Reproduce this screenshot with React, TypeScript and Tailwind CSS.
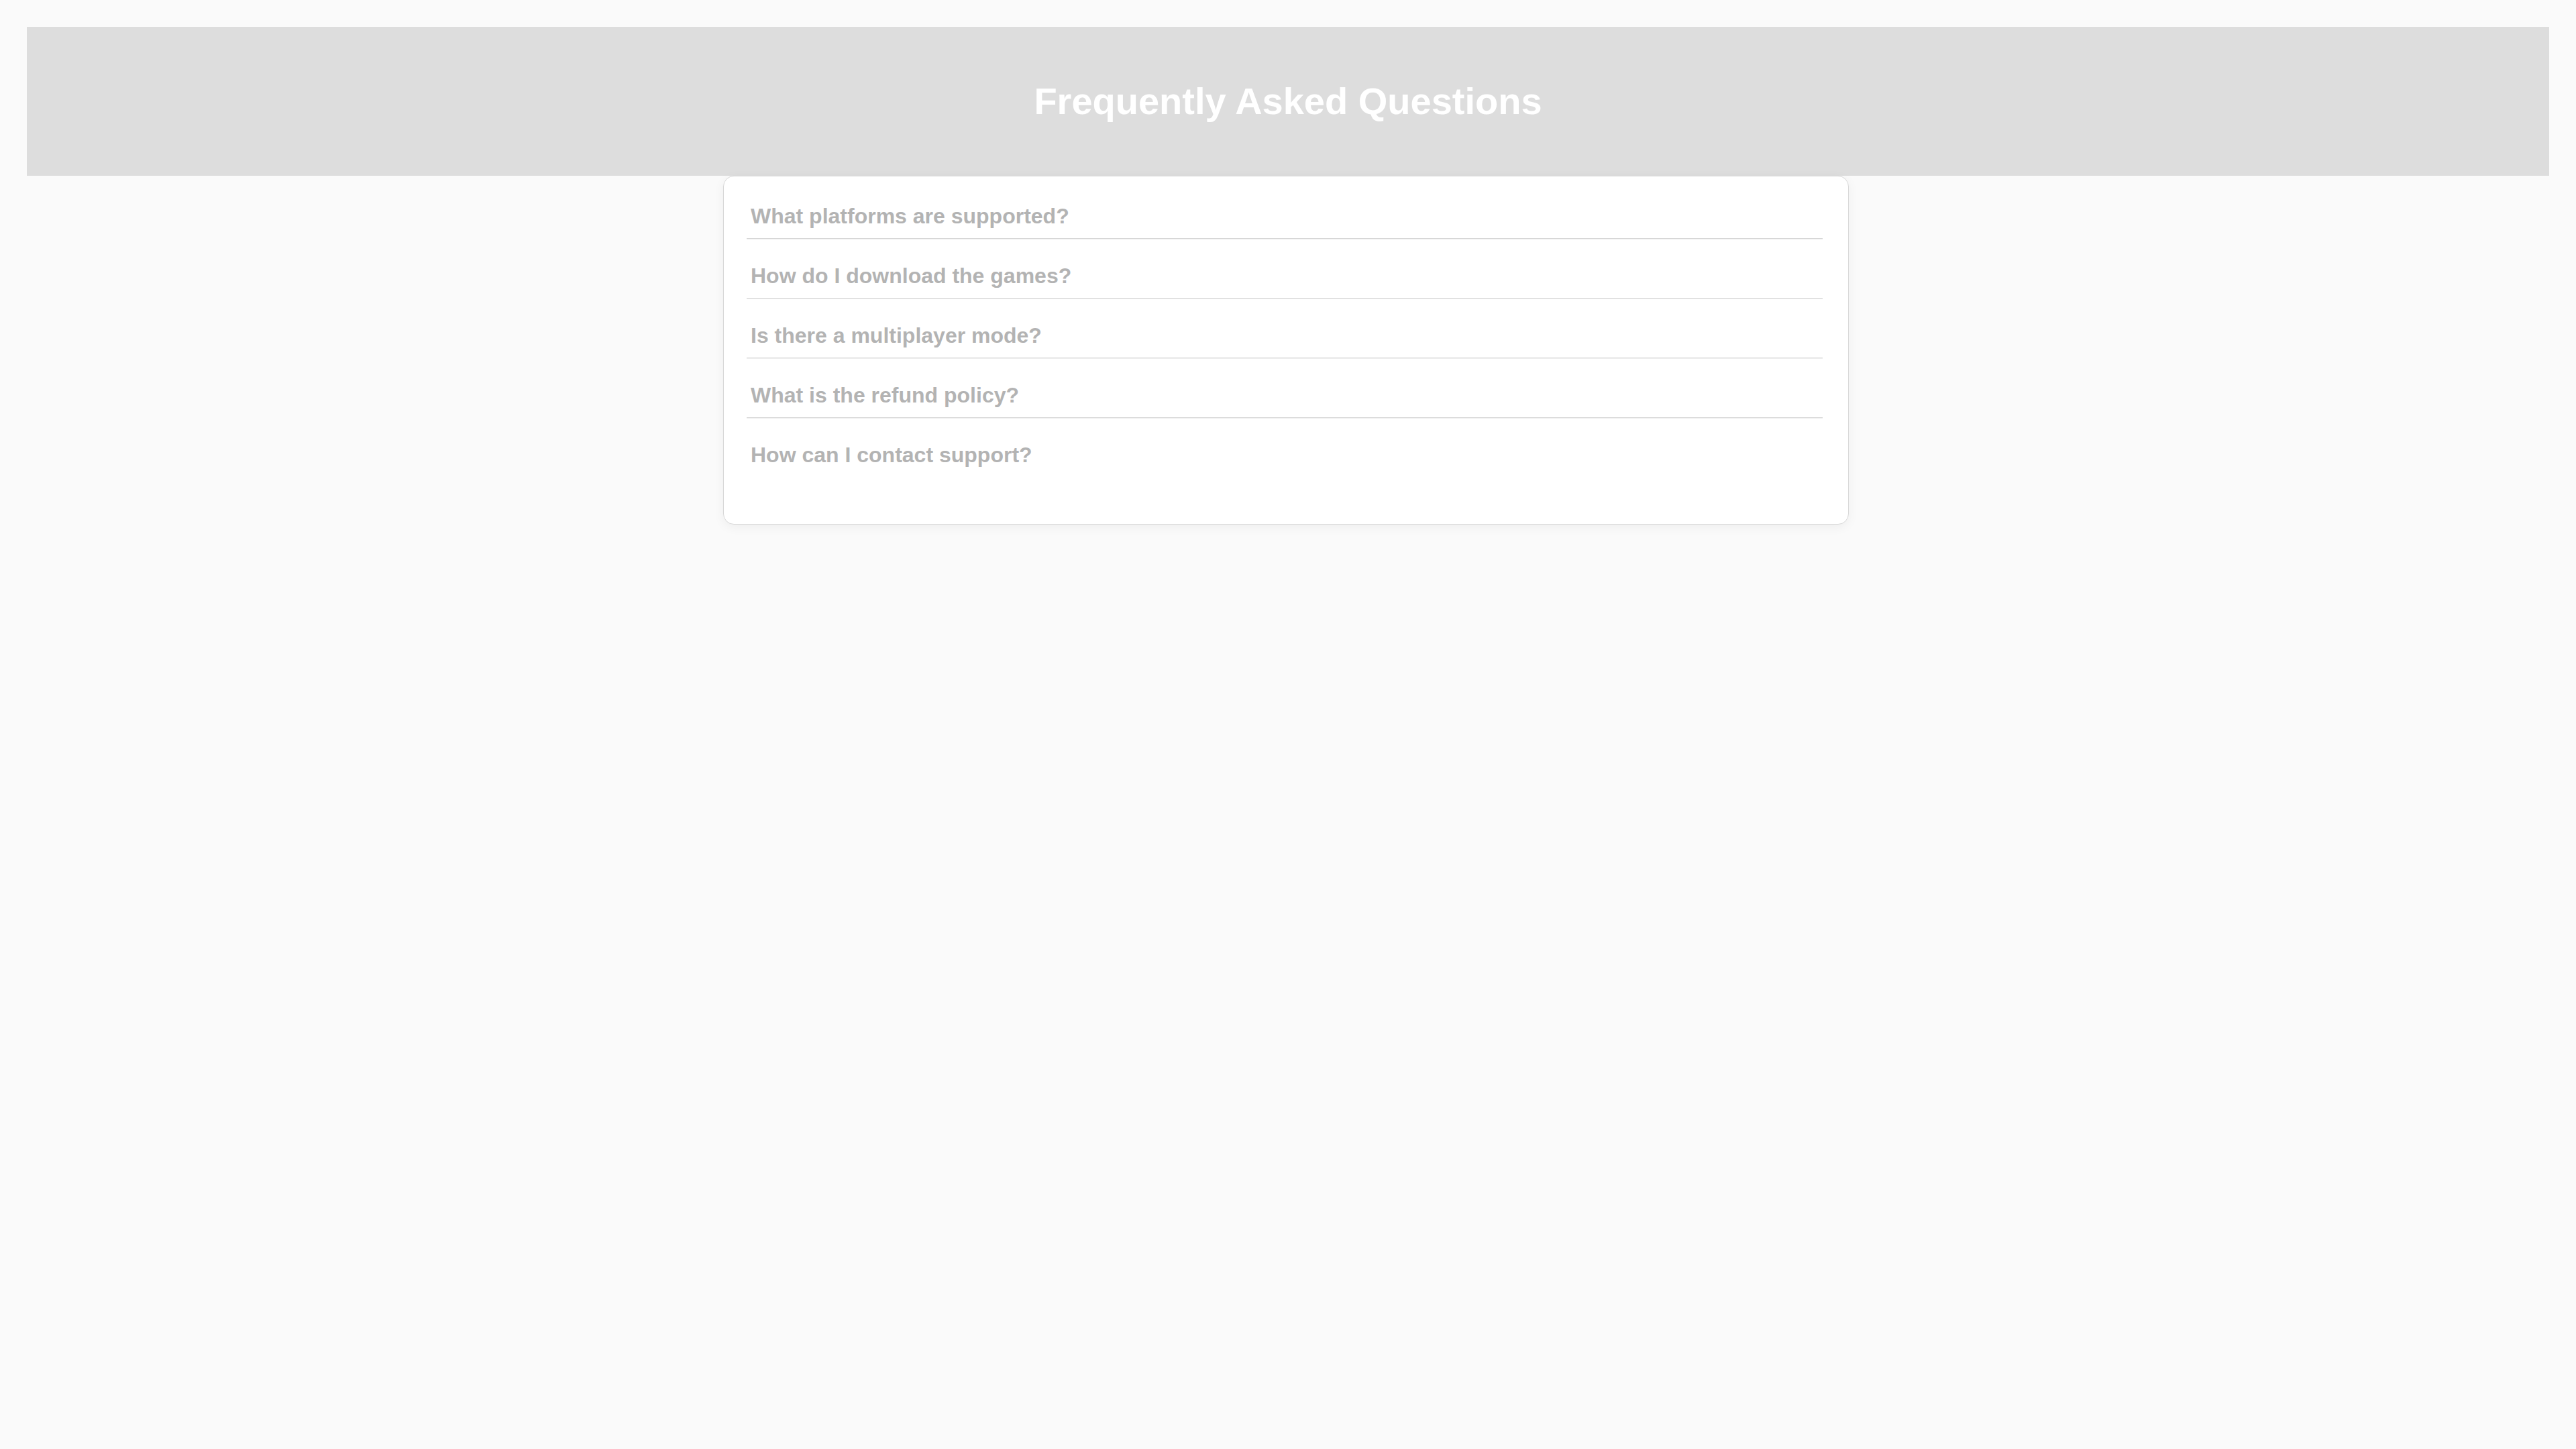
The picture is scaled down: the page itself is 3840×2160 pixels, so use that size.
const questions = [
  "What platforms are supported?",
  "How do I download the games?",
  "Is there a multiplayer mode?",
  "What is the refund policy?",
  "How can I contact support?",
];

export default function App() {
  return (
    <div className="min-h-screen bg-[#fafafa] p-10 font-['Liberation_Sans',Arial,sans-serif]">
      <header className="flex h-[222px] items-center justify-center bg-[#dddddd]">
        <h1 className="text-[56px] font-bold leading-none text-white">Frequently Asked Questions</h1>
      </header>

      <section className="mx-auto w-[1678px] -translate-x-[3px] rounded-2xl border border-[#d8d8d8] bg-white pb-[70px] pl-[34px] pr-[38px] pt-[5px] shadow-[0_4px_16px_rgba(0,0,0,0.05)]">
        {questions.map((question, index) => (
          <div key={question}>
            <div className="px-[6px] pb-[13px] pt-[34px]">
              <p className="text-[32px] font-bold leading-10 text-[#b3b3b3]">{question}</p>
            </div>
            {index < questions.length - 1 && (
              <div className="h-[2px] border-t border-[#d6d6d6] bg-[#eeeeee]" />
            )}
          </div>
        ))}
      </section>
    </div>
  );
}
